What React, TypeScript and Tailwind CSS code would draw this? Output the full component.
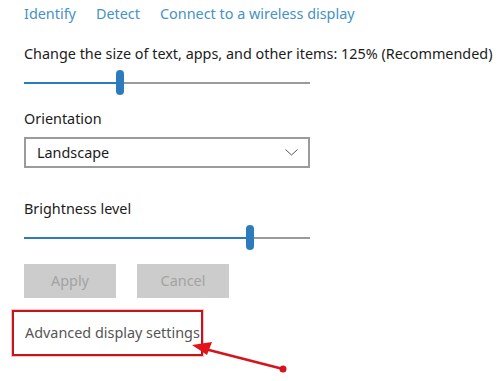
import React from "react";

function Slider({ thumb }: { thumb: number }) {
  return (
    <div className="relative w-[286px] h-[26px]">
      <div className="absolute left-0 right-0 top-[12px] h-[2px] bg-[#9a9a9a]" />
      <div className="absolute left-0 top-[12px] h-[2px] bg-[#2b7bbd]" style={{ width: thumb }} />
      <div
        className="absolute top-0 w-[8px] h-[25px] rounded-full bg-[#2b7bbd]"
        style={{ left: thumb - 4 }}
      />
    </div>
  );
}

export default function App() {
  return (
    <div
      className="relative w-[500px] h-[381px] bg-white overflow-hidden text-[14.4px] whitespace-nowrap text-[#1c1c1c]"
      style={{ fontFamily: '"Noto Sans", "Open Sans", sans-serif' }}
    >
      <div className="pl-[24px] pt-[2px] flex flex-col">
        <div className="flex gap-[20px] h-[24px] items-center text-[#4592c7]">
          <span>Identify</span>
          <span>Detect</span>
          <span>Connect to a wireless display</span>
        </div>
        <div className="mt-[16px] h-[24px] flex items-center">
          Change the size of text, apps, and other items: 125% (Recommended)
        </div>
        <div className="mt-[4px]">
          <Slider thumb={96} />
        </div>
        <div className="mt-[11px] h-[24px] flex items-center">Orientation</div>
        <div className="mt-[6px] w-[286px] h-[31px] border-2 border-[#9b9b9b] flex items-center justify-between pl-[11px] pr-[10px]">
          <span>Landscape</span>
          <svg width="13" height="7" viewBox="0 0 13 7" fill="none">
            <path d="M0.5 0.5 L6.5 6 L12.5 0.5" stroke="#555" strokeWidth="1" />
          </svg>
        </div>
        <div className="mt-[29px] h-[24px] flex items-center">Brightness level</div>
        <div className="mt-[4px]">
          <Slider thumb={226} />
        </div>
        <div className="mt-[13px] flex gap-[21px]">
          <div className="w-[92px] h-[34px] bg-[#cccccc] text-[#a3a3a3] flex items-center justify-center">
            Apply
          </div>
          <div className="w-[92px] h-[34px] bg-[#cccccc] text-[#a3a3a3] flex items-center justify-center">
            Cancel
          </div>
        </div>
      </div>
      <div className="ml-[12px] mt-[12px] w-[191px] h-[46px] border-2 border-[#c4141c] shadow-[0_0_0_1px_rgba(230,80,80,0.35)] flex items-center pl-[11px] text-[#555555]">
        Advanced display settings
      </div>
      <svg className="absolute left-0 top-0" width="500" height="381" viewBox="0 0 500 381">
        <line x1="283" y1="369" x2="205" y2="349" stroke="#d4161c" strokeWidth="2.5" />
        <polygon points="192,345 212,342 207,355" fill="#e0141a" />
        <circle cx="283" cy="369" r="3.5" fill="#d4161c" />
      </svg>
    </div>
  );
}
